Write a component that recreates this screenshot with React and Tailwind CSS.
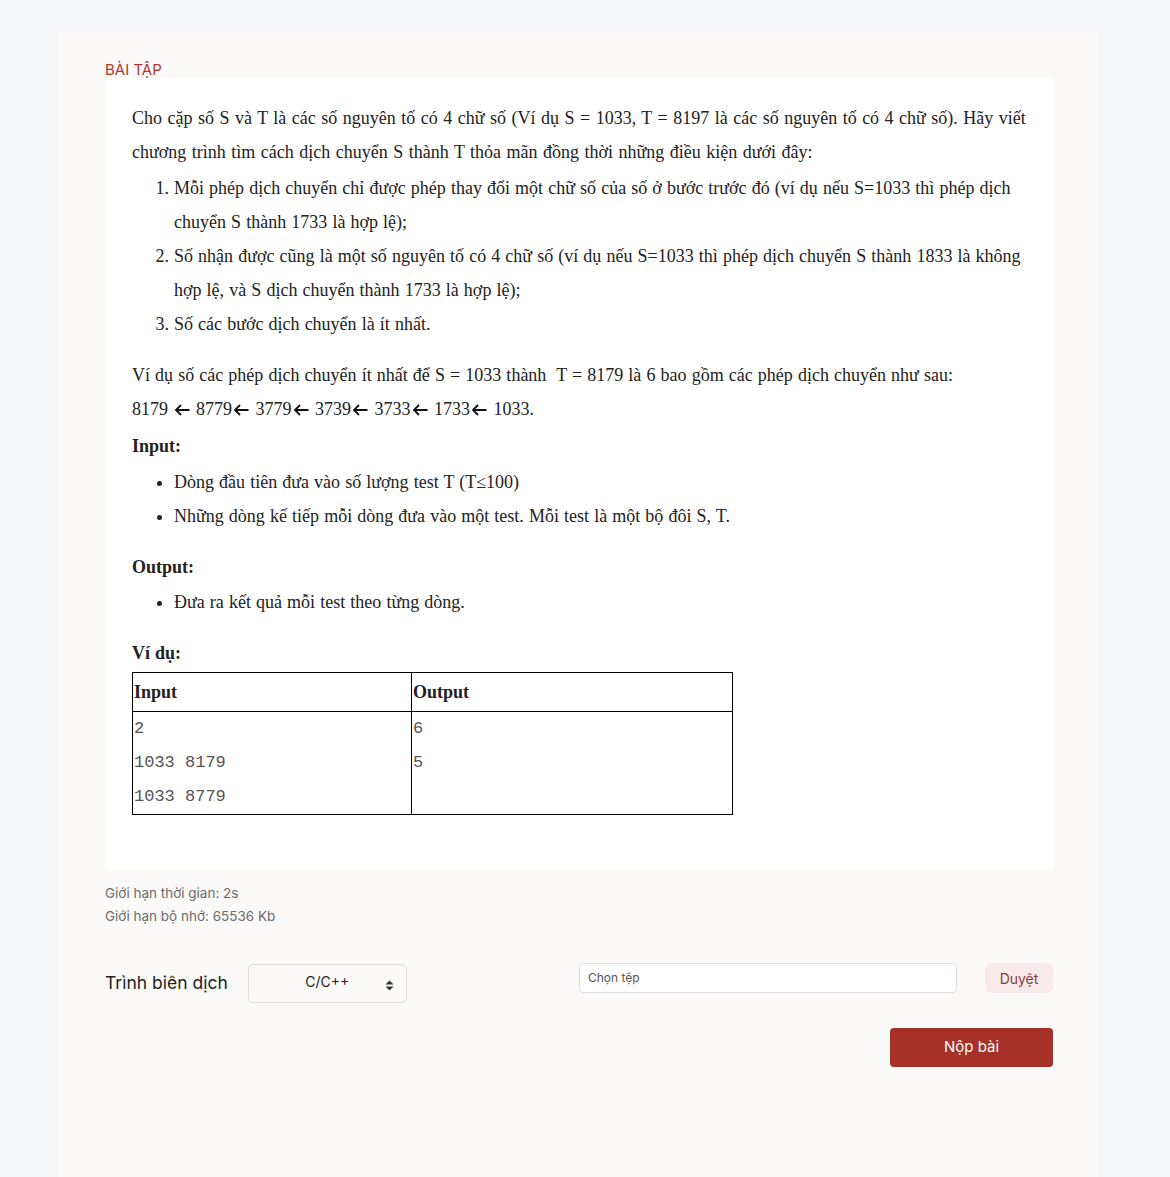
export default function App() {
  const serif = { fontFamily: '"Liberation Serif", "Times New Roman", serif' };
  const mono = { fontFamily: '"Liberation Mono", "Courier New", monospace' };
  return (
    <div className="min-h-screen bg-[#f5f6f8] pt-[32px] pl-[58px]" style={{ fontFamily: 'Inter, "Noto Sans", sans-serif' }}>
      <div className="w-[1040px] min-h-[1145px] bg-[#fbfaf9] pl-[47px] pr-[45px] pt-[30px] pb-[110px]">
        <div className="text-[15px] leading-[16px] text-[#b0362d]">BÀI TẬP</div>
        <div className="bg-white pl-[27px] pr-[20px] pt-[23px] pb-[55px] text-[18px] leading-[34px] text-[#222]" style={serif}>
          <div className="[word-spacing:0.6px]">
            <p className="[word-spacing:1px]">
              Cho cặp số S và T là các số nguyên tố có 4 chữ số (Ví dụ S = 1033, T = 8197 là các số nguyên tố có 4 chữ số). Hãy viết chương trình tìm cách dịch chuyển S thành T thỏa mãn đồng thời những điều kiện dưới đây:
            </p>
            <ol className="mt-[2px] list-decimal pl-[42px]">
              <li>Mỗi phép dịch chuyển chỉ được phép thay đổi một chữ số của số ở bước trước đó (ví dụ nếu S=1033 thì phép dịch chuyển S thành 1733 là hợp lệ);</li>
              <li>Số nhận được cũng là một số nguyên tố có 4 chữ số (ví dụ nếu S=1033 thì phép dịch chuyển S thành 1833 là không hợp lệ, và S dịch chuyển thành 1733 là hợp lệ);</li>
              <li>Số các bước dịch chuyển là ít nhất.</li>
            </ol>
            <p className="mt-[17px]">Ví dụ số các phép dịch chuyển ít nhất để S = 1033 thành&nbsp; T = 8179 là 6 bao gồm các phép dịch chuyển như sau:</p>
            <p className="[word-spacing:0px]">
              8179 <Arrow /> 8779<Arrow /> 3779<Arrow /> 3739<Arrow /> 3733<Arrow /> 1733<Arrow /> 1033.
            </p>
            <p className="mt-[3px] font-bold">Input:</p>
            <ul className="mt-[2px] list-disc pl-[42px]">
              <li>Dòng đầu tiên đưa vào số lượng test T (T≤100)</li>
              <li>Những dòng kế tiếp mỗi dòng đưa vào một test. Mỗi test là một bộ đôi S, T.</li>
            </ul>
            <p className="mt-[17px] font-bold">Output:</p>
            <ul className="mt-[1px] list-disc pl-[42px]">
              <li>Đưa ra kết quả mỗi test theo từng dòng.</li>
            </ul>
            <p className="mt-[17px] font-bold">Ví dụ:</p>
          </div>
          <table className="mt-[2px] w-[601px] border-collapse border border-black table-fixed">
            <colgroup>
              <col className="w-[279px]" />
              <col />
            </colgroup>
            <thead>
              <tr>
                <th className="border border-black text-left font-bold px-[1px] py-[2px] leading-[34px]">Input</th>
                <th className="border border-black text-left font-bold px-[1px] py-[2px] leading-[34px]">Output</th>
              </tr>
            </thead>
            <tbody>
              <tr>
                <td className="border border-black align-top px-[1px] py-0 text-[17px] leading-[34px] text-[#555]" style={mono}>
                  <div>2</div>
                  <div>1033 8179</div>
                  <div>1033 8779</div>
                </td>
                <td className="border border-black align-top px-[1px] py-0 text-[17px] leading-[34px] text-[#555]" style={mono}>
                  <div>6</div>
                  <div>5</div>
                </td>
              </tr>
            </tbody>
          </table>
        </div>

        <div className="mt-[12px] text-[13.5px] leading-[23px] text-[#6b6b6b]">
          <div>Giới hạn thời gian: 2s</div>
          <div>Giới hạn bộ nhớ: 65536 Kb</div>
        </div>

        <div className="mt-[35px] grid grid-cols-2">
          <div className="flex items-start">
            <div className="mt-[7px] text-[17.5px] leading-[26px] text-[#222]">Trình biên dịch</div>
            <div className="relative ml-[20px] mt-[1px] flex h-[39px] w-[159px] items-center justify-center rounded-[5px] border border-[#dcdcdc] pb-[5px] text-[14px] text-[#222]">
              C/C++
              <svg className="absolute right-[12px] top-[15px]" width="9" height="11" viewBox="0 0 9 11">
                <path d="M4.5 0.5 L8.5 4.5 L0.5 4.5 Z" fill="#333" />
                <path d="M4.5 10.5 L8.5 6.5 L0.5 6.5 Z" fill="#333" />
              </svg>
            </div>
          </div>
          <div className="flex items-start">
            <div className="flex h-[30px] w-[378px] items-center rounded-[4px] border border-[#e0dde3] bg-white pl-[8px] text-[12px] text-[#555]">
              Chọn tệp
            </div>
            <div className="ml-auto flex h-[30px] w-[68px] items-center justify-center rounded-[6px] bg-[#f8eaea] text-[14px] text-[#8a3b3f]">
              Duyệt
            </div>
          </div>
        </div>

        <div className="mt-[25px] flex justify-end">
          <div className="flex h-[39px] w-[163px] items-center justify-center rounded-[4px] bg-[#a63128] text-[15px] text-white">
            Nộp bài
          </div>
        </div>
      </div>
    </div>
  );
}

function Arrow() {
  return (
    <svg className="ml-[1px] mr-[2px] inline-block align-[-1px]" width="16" height="12" viewBox="0 0 16 12">
      <path d="M7 1 L2 6 L7 11 M2 6 H15.5" fill="none" stroke="#111" strokeWidth="1.8" />
    </svg>
  );
}
